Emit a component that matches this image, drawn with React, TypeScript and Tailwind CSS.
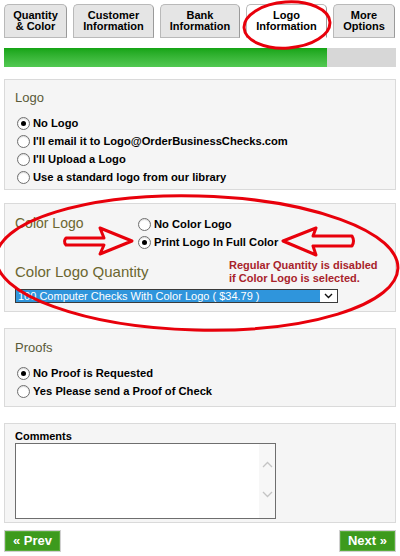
import type { ReactNode } from "react";

const tabs = [
  { l1: "Quantity", l2: "& Color", w: "w-[63px]", active: false },
  { l1: "Customer", l2: "Information", w: "w-[81px]", active: false },
  { l1: "Bank", l2: "Information", w: "w-[80px]", active: false },
  { l1: "Logo", l2: "Information", w: "w-[81px]", active: true },
  { l1: "More", l2: "Options", w: "w-[62px]", active: false },
];

function Radio({ checked, children }: { checked?: boolean; children: ReactNode }) {
  return (
    <label className="flex items-center h-[18px] text-[11.2px] font-bold text-black">
      <span className="w-[13px] h-[13px] rounded-full border border-[#6f6f6f] bg-white flex items-center justify-center mr-[3px] shadow-[inset_0_1px_1px_rgba(0,0,0,0.15)]">
        {checked && <span className="w-[5px] h-[5px] rounded-full bg-black" />}
      </span>
      {children}
    </label>
  );
}

function Panel({ className, children }: { className?: string; children: ReactNode }) {
  return (
    <section className={`mx-[4px] border border-[#dadada] bg-[#f5f5f5] px-[10px] ${className ?? ""}`}>
      {children}
    </section>
  );
}

export default function App() {
  return (
    <div className="relative w-[400px] h-[556px] bg-white overflow-hidden font-['Liberation_Sans',Arial,sans-serif]">
      {/* Tabs */}
      <div className="flex gap-[6px] pl-[4px] pt-[4px]">
        {tabs.map((t) => (
          <div
            key={t.l1}
            className={`${t.w} h-[34px] rounded-t-[5px] border border-[#b9b9b9] border-r-[#9a9a9a] flex flex-col items-center justify-center text-[11px] font-bold leading-[11.5px] text-black ${
              t.active ? "bg-white border-b-white" : "bg-[#e5e5e5]"
            }`}
          >
            <span>{t.l1}</span>
            <span>{t.l2}</span>
          </div>
        ))}
      </div>

      {/* Progress */}
      <div className="mx-[4px] mt-[10px] h-[19px] bg-[#d7d7d7] flex">
        <div className="w-[323px] h-full bg-gradient-to-b from-[#14a414] to-[#52c952]" />
      </div>

      {/* Logo */}
      <Panel className="mt-[12px] h-[111px] pt-[10px]">
        <h3 className="text-[13px] leading-[16px] text-[#5a5a38]">Logo</h3>
        <div className="mt-[8px] pl-[2px]">
          <Radio checked>No Logo</Radio>
          <Radio>I'll email it to Logo@OrderBusinessChecks.com</Radio>
          <Radio>I'll Upload a Logo</Radio>
          <Radio>Use a standard logo from our library</Radio>
        </div>
      </Panel>

      {/* Color logo */}
      <Panel className="mt-[13px] h-[109px] pt-[11px]">
        <div className="flex">
          <div className="w-[123px] text-[14px] leading-[16px] text-[#6b6630]">Color Logo</div>
          <div>
            <Radio>No Color Logo</Radio>
            <Radio checked>Print Logo In Full Color</Radio>
          </div>
        </div>
        <div className="flex items-start mt-[8px]">
          <div className="w-[214px] mt-[4px] text-[15px] leading-[18px] text-[#6b6630]">Color Logo Quantity</div>
          <div className="text-[11px] font-bold leading-[13px] text-[#a8232b]">
            <div>Regular Quantity is disabled</div>
            <div>if Color Logo is selected.</div>
          </div>
        </div>
        <div className="mt-[4px] w-[323px] h-[14px] border border-[#3a3a3a] bg-white flex">
          <div className="flex-1 bg-[#2f95dc] text-white text-[11px] leading-[12px] pl-[2px] whitespace-nowrap overflow-hidden">
            100 Computer Checks With Color Logo ( $34.79 )
          </div>
          <div className="w-[17px] flex items-center justify-center">
            <svg width="9" height="6" viewBox="0 0 9 6">
              <path d="M1 1l3.5 3.5L8 1" fill="none" stroke="#111" strokeWidth="1.4" />
            </svg>
          </div>
        </div>
      </Panel>

      {/* Proofs */}
      <Panel className="mt-[16px] h-[79px] pt-[11px]">
        <h3 className="text-[13px] leading-[16px] text-[#5a5a38]">Proofs</h3>
        <div className="mt-[8px] pl-[2px]">
          <Radio checked>No Proof is Requested</Radio>
          <Radio>Yes Please send a Proof of Check</Radio>
        </div>
      </Panel>

      {/* Comments */}
      <Panel className="mt-[16px] h-[100px] pt-[6px]">
        <div className="text-[11px] font-bold leading-[12px] text-black">Comments</div>
        <div className="mt-[1px] w-[261px] h-[76px] border border-[#6e6e6e] bg-white flex justify-end">
          <div className="w-[16px] h-full bg-[#f7f7f7] flex flex-col items-center pt-[17px] gap-[23px]">
            <svg width="11" height="7" viewBox="0 0 11 7">
              <path d="M1 6l4.5-4.5L10 6" fill="none" stroke="#c4c4c4" strokeWidth="1.3" />
            </svg>
            <svg width="11" height="7" viewBox="0 0 11 7">
              <path d="M1 1l4.5 4.5L10 1" fill="none" stroke="#c4c4c4" strokeWidth="1.3" />
            </svg>
          </div>
        </div>
      </Panel>

      {/* Buttons */}
      <div className="flex justify-between mx-[4px] mt-[7px]">
        <button className="w-[57px] h-[22px] border border-[#d0d0d0] bg-[#3d9a1d] text-white text-[13px] font-bold shadow-[inset_0_0_0_1px_#5aac3c]">
          « Prev
        </button>
        <button className="w-[57px] h-[22px] border border-[#d0d0d0] bg-[#3d9a1d] text-white text-[13px] font-bold shadow-[inset_0_0_0_1px_#5aac3c]">
          Next »
        </button>
      </div>

      {/* Red annotations */}
      <svg className="absolute inset-0 pointer-events-none" width="400" height="556" viewBox="0 0 400 556">
        <ellipse cx="287" cy="25" rx="43" ry="23" transform="rotate(-4 287 25)" fill="none" stroke="#e8000b" strokeWidth="3" />
        <ellipse cx="197" cy="263" rx="201" ry="67" transform="rotate(1.5 197 263)" fill="none" stroke="#e8000b" strokeWidth="3" />
        <path
          d="M66 238 L104 238 L100 228 L132 241 L100 254 L104 245 L66 245 Q63 241.5 66 238 Z"
          fill="none"
          stroke="#e8000b"
          strokeWidth="3"
          strokeLinejoin="round"
        />
        <path
          d="M352 236 L313 236 L316 228 L283 241 L316 255 L313 246 L352 246 Q355 241 352 236 Z"
          fill="none"
          stroke="#e8000b"
          strokeWidth="3"
          strokeLinejoin="round"
        />
      </svg>
    </div>
  );
}
